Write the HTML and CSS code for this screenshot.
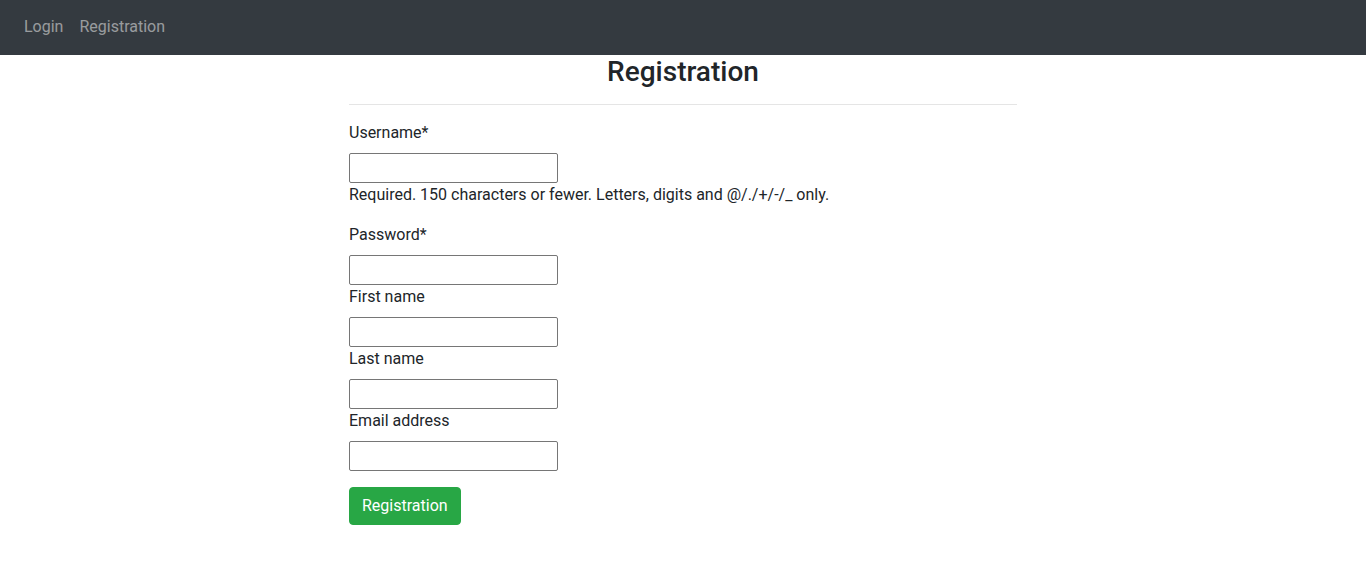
FILE: index.html
```html
<!DOCTYPE html>
<html lang="en">
<head>
<meta charset="utf-8">
<title>Registration</title>
<link rel="stylesheet" href="styles.css">
</head>
<body>
<nav class="navbar">
  <a class="nav-link" href="#">Login</a>
  <a class="nav-link" href="#">Registration</a>
</nav>
<main class="content">
  <h3 class="title">Registration</h3>
  <hr class="divider">
  <form class="form">
    <div class="group">
      <label class="label" for="u">Username*</label>
      <input class="input" id="u" type="text">
      <span class="help">Required. 150 characters or fewer. Letters, digits and @/./+/-/_ only.</span>
    </div>
    <div class="group">
      <label class="label" for="p">Password*</label>
      <input class="input" id="p" type="password">
      <label class="label" for="f">First name</label>
      <input class="input" id="f" type="text">
      <label class="label" for="l">Last name</label>
      <input class="input" id="l" type="text">
      <label class="label" for="e">Email address</label>
      <input class="input" id="e" type="email">
    </div>
    <div class="actions">
      <button class="btn" type="submit">Registration</button>
    </div>
  </form>
</main>
</body>
</html>
```
FILE: styles.css
```css
* { box-sizing: border-box; }
html, body { margin: 0; padding: 0; }
body {
  font-family: Roboto, "Liberation Sans", sans-serif;
  font-size: 16px;
  line-height: 1.5;
  color: #212529;
  background: #fff;
}
.navbar {
  display: flex;
  align-items: flex-start;
  padding: 7px 16px 8px;
  background: #343a40;
}
.nav-link {
  display: block;
  padding: 8px;
  color: rgba(255, 255, 255, 0.5);
  text-decoration: none;
  line-height: 24px;
}
.content {
  width: 668px;
  margin: 0 auto;
}
.title {
  margin: 0;
  text-align: center;
  font-size: 28px;
  font-weight: 500;
  line-height: 1.2;
}
.divider {
  margin: 15px 0 16px;
  border: 0;
  border-top: 1px solid rgba(0, 0, 0, 0.1);
  height: 0;
}
.form {
  display: flex;
  flex-direction: column;
}
.group {
  display: flex;
  flex-direction: column;
  align-items: flex-start;
  margin-bottom: 16px;
}
.label {
  display: block;
  line-height: 24px;
  margin-bottom: 8px;
}
.input {
  display: block;
  width: 209px;
  height: 30px;
  margin: 0;
  border: 1px solid #767676;
  border-radius: 2px;
  padding: 1px 2px;
  font: inherit;
}
.help {
  display: block;
  line-height: 24px;
}
.actions { display: flex; }
.btn {
  display: inline-block;
  font: inherit;
  line-height: 1.5;
  padding: 6px 12px;
  color: #fff;
  background: #28a745;
  border: 1px solid #28a745;
  border-radius: 4px;
  cursor: pointer;
}
```
